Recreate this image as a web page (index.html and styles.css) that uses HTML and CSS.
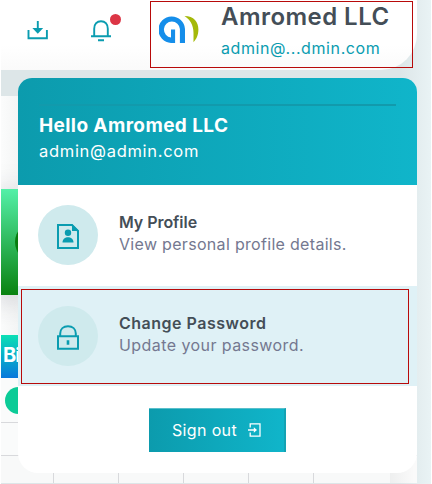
FILE: index.html
```html
<!DOCTYPE html>
<html lang="en">
<head>
    <meta charset="UTF-8">
    <meta name="viewport" content="width=device-width, initial-scale=1.0">
    <title>Amromed LLC</title>
    <link rel="stylesheet" href="styles.css">
</head>
<body>
    <header class="topbar">
        <svg class="download" width="22" height="20" viewBox="0 0 22 20" fill="none" stroke="#0a9cb0" stroke-width="1.9">
            <path d="M1.5 10v8.2h18.4V10M10.8 1v9"/>
            <path d="M5.4 8h10.8l-5.4 5.8z" fill="#0a9cb0" stroke="none"/>
        </svg>
        <div class="bell">
            <svg width="20" height="22" viewBox="0 0 20 22" fill="none" stroke="#0a9cb0" stroke-width="1.9">
                <path d="M3.2 16V8.7C3.2 4 6 1.2 10 1.2s6.8 2.8 6.8 7.5V16M0 16.2h20M7 20.2h6"/>
            </svg>
            <span class="dot"></span>
        </div>
        <div class="account">
            <svg class="logo" width="40" height="27" viewBox="0 0 40 27">
                <path d="M12 27A13.3 13.3 0 1 1 26 13V27H20.9V13A8 8 0 1 0 12 21.5V13.5H16.1V27Z" fill="#158eea"/>
                <path d="M25.5 0C35 0 39.4 6 39.4 13.5C39.4 19 37.3 23.5 34.5 26.2V17C34.5 9 31 3.5 25.5 0Z" fill="#a5b909"/>
            </svg>
            <div class="who">
                <div class="name">Amromed LLC</div>
                <div class="mail">admin@...dmin.com</div>
            </div>
        </div>
    </header>

    <main class="content">
        <div class="stat-card"><span class="stat-icon"></span></div>
        <div class="table-head">Bi</div>
        <div class="row first"><span class="status"></span></div>
        <div class="row"></div>
        <div class="cells"><i></i><i></i><i></i><i></i><i></i><b></b></div>
    </main>

    <div class="menu">
        <div class="menu-header">
            <hr>
            <div class="hello">Hello Amromed LLC</div>
            <div class="email">admin@admin.com</div>
        </div>
        <a class="item">
            <span class="icon">
                <svg width="22" height="25" viewBox="0 0 22 25">
                    <path d="M1 1h14l6 6v17H1z" fill="none" stroke="#0a9cb0" stroke-width="2"/>
                    <path d="M15 0v7h7z" fill="#0a9cb0"/>
                    <circle cx="11" cy="8.8" r="3.2" fill="#0a9cb0"/>
                    <path d="M5.5 18.5c0-7 11-7 11 0z" fill="#0a9cb0"/>
                </svg>
            </span>
            <span class="text">
                <span class="title profile">My Profile</span>
                <span class="desc view">View personal profile details.</span>
            </span>
        </a>
        <a class="item active">
            <span class="icon">
                <svg width="22" height="25" viewBox="0 0 22 25" fill="none" stroke="#0a9cb0" stroke-width="2">
                    <path d="M1 11.2h20v12.6H1zM3.2 11V8.6C3.2 4 6.5 1.2 11 1.2s7.8 2.8 7.8 7.4V11"/>
                    <path d="M11 15.2v4.6" stroke-width="2.6"/>
                </svg>
            </span>
            <span class="text">
                <span class="title change">Change Password</span>
                <span class="desc update">Update your password.</span>
            </span>
        </a>
        <div class="menu-footer">
            <a class="signout">
                <span>Sign out</span>
                <svg width="13" height="14" viewBox="0 0 13 14" fill="none" stroke="#fff" stroke-width="1.3">
                    <path d="M2.2 4.4V.8h9.8v12.4H2.2V9.6M0 7h7"/>
                    <path d="M5.8 4.2L9 7 5.8 9.8z" fill="#fff" stroke="none"/>
                </svg>
            </a>
        </div>
    </div>

    <div class="mark mark-account"></div>
    <div class="mark mark-password"></div>
</body>
</html>
```

FILE: styles.css
```css
* {
    margin: 0;
    padding: 0;
    box-sizing: border-box;
}

body {
    position: relative;
    width: 432px;
    height: 484px;
    padding-left: 1px;
    overflow: hidden;
    background: linear-gradient(to right, #fff 1px, #dde6e8 1px, #dde6e8 400px, #e9f3f5 431px, #fff 431px);
    font-family: Inter, "Open Sans", sans-serif;
    color: #444e57;
}

.topbar {
    display: flex;
    width: 416px;
    height: 70px;
    background: linear-gradient(#fff 45px, #fafafa);
    border-bottom-right-radius: 36px;
}

.download {
    margin: 20px 0 0 26px;
}

.bell {
    position: relative;
    margin: 20px 0 0 42px;
}

.dot {
    position: absolute;
    left: 19px;
    top: -6px;
    width: 11px;
    height: 11px;
    border-radius: 50%;
    background: #dc3545;
}

.account {
    display: flex;
    margin-left: 48px;
}

.logo {
    margin-top: 16px;
}

.who {
    margin-left: 22px;
    white-space: nowrap;
}

.name {
    margin-top: 2px;
    line-height: 30px;
    font-size: 24px;
    font-weight: 600;
    letter-spacing: 0.45px;
}

.mail {
    margin-top: 6px;
    line-height: 20px;
    font-size: 16px;
    letter-spacing: 0.6px;
    color: #0a9cb0;
}

.content {
    width: 416px;
    height: 387px;
    margin-top: 26px;
    padding-top: 93px;
    overflow: hidden;
    background: linear-gradient(to right, #fbfcfc, #f4f5f5 18px);
}

.stat-card {
    display: flex;
    align-items: center;
    justify-content: flex-end;
    width: 17px;
    height: 106px;
    overflow: hidden;
    background: linear-gradient(#54f0a8, #0a8210);
    box-shadow: 0 5px 30px rgba(40, 40, 70, 0.4);
}

.stat-icon {
    flex: none;
    width: 40px;
    height: 40px;
    margin-right: -37px;
    border-radius: 50%;
    background: #087d0e;
}

.table-head {
    height: 43px;
    margin-top: 40px;
    padding-left: 2px;
    line-height: 41px;
    font-size: 20px;
    font-weight: 700;
    letter-spacing: -1px;
    color: #fff;
    background: linear-gradient(#0ce0b5, #0878dc);
}

.row {
    height: 33px;
    background: #fafbfb;
    border-bottom: 1px solid #d8d9dc;
}

.row.first {
    height: 45px;
    padding: 9px 0 0 4px;
}

.status {
    display: block;
    width: 27px;
    height: 27px;
    border-radius: 50%;
    background: #0bcb97;
}

.cells {
    display: grid;
    grid-template-columns: 53px 65px 65px 65px 65px 1fr;
    height: 28px;
    background: #f8f9f9;
}

.cells i {
    border-right: 1px solid #d8d9dc;
}

.cells b {
    background: linear-gradient(to right, transparent 76px, #eeefef 76px, #fafafa 100px);
}

.menu {
    position: absolute;
    left: 18px;
    top: 78px;
    width: 399px;
    height: 395px;
    overflow: hidden;
    border-radius: 14px 14px 20px 20px;
    background: #fff;
}

.menu-header {
    height: 107px;
    padding: 26px 21px 0;
    color: #fff;
    background: linear-gradient(to right, #0c9bad, #10b5ca);
}

.menu-header hr {
    height: 2px;
    border: 0;
    background: #129aac;
}

.hello {
    margin-top: 8px;
    line-height: 24px;
    font-size: 19px;
    font-weight: 700;
    letter-spacing: 0.4px;
    white-space: nowrap;
}

.email {
    margin-top: 3px;
    line-height: 20px;
    font-size: 16.5px;
    letter-spacing: 0.7px;
}

.item {
    display: flex;
    align-items: center;
    height: 101px;
    padding: 0 0 2px 20px;
}

.item.active {
    height: 100px;
    padding-bottom: 0;
    background: #dff1f6;
}

.item.active .text {
    margin-top: -5px;
}

.icon {
    display: flex;
    align-items: center;
    justify-content: center;
    width: 60px;
    height: 60px;
    padding-top: 3px;
    border-radius: 50%;
    background: #cfeaed;
}

.text {
    display: flex;
    flex-direction: column;
    margin: -3px 0 0 21px;
    white-space: nowrap;
}

.title {
    line-height: 22px;
    font-size: 16px;
    font-weight: 600;
}

.desc {
    line-height: 22px;
    font-size: 16px;
    color: #747890;
}

.profile {
    letter-spacing: -0.05px;
}

.change {
    letter-spacing: 0.5px;
}

.view {
    letter-spacing: 0.31px;
}

.update {
    letter-spacing: 0.43px;
}

.menu-footer {
    display: flex;
    justify-content: center;
    padding-top: 22px;
}

.signout {
    display: flex;
    align-items: center;
    justify-content: center;
    gap: 11px;
    width: 137px;
    height: 44px;
    padding-bottom: 1px;
    font-size: 16px;
    letter-spacing: 0.35px;
    color: #fff;
    background: linear-gradient(to right, #0c9bad, #10b5ca);
    border-top: 1px solid #59bfcb;
    border-right: 2px solid #14a2b3;
}

.mark {
    position: absolute;
    border: 1px solid #b80a0a;
}

.mark-account {
    left: 150px;
    top: 1px;
    width: 263px;
    height: 67px;
}

.mark-password {
    left: 21px;
    top: 289px;
    width: 388px;
    height: 95px;
}
```
